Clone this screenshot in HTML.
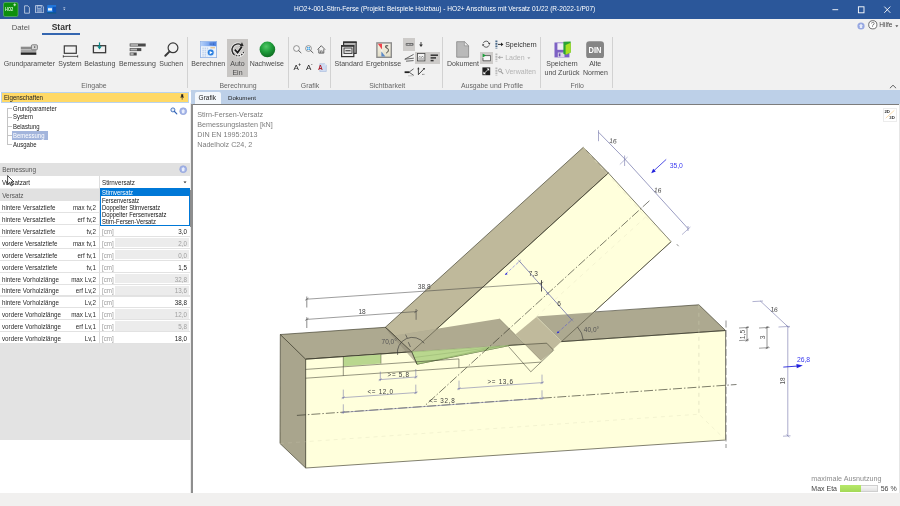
<!DOCTYPE html>
<html>
<head>
<meta charset="utf-8">
<title>HO2+</title>
<style>
*{box-sizing:border-box;margin:0;padding:0}
html,body{width:900px;height:506px;overflow:hidden}
body{position:relative;background:#f1f1f1;font-family:"Liberation Sans",sans-serif;color:#444}
.a{position:absolute}
.t{position:absolute;white-space:nowrap;line-height:1;font-size:7px;color:#4a4a4a}
.c{transform:translateX(-50%)}
.r{transform:translateX(-100%)}
.n{transform:scaleX(0.905);transform-origin:0 50%}
.nr{transform:translateX(-100%) scaleX(0.905);transform-origin:100% 50%}
.gl{color:#6a6a6a}
.sep{position:absolute;top:37px;width:1px;height:51px;background:#d2d2d2}
.row{position:absolute;left:0;width:189px;height:12px;background:#fff;border-bottom:1px solid #e4e4e4}
.row .t{font-size:6.25px;color:#333}
.ro{position:absolute;left:115px;top:1px;width:74px;height:10px;background:#ececec}
</style>
</head>
<body>
<div id="w" style="position:absolute;left:0;top:0;width:900px;height:506px;will-change:transform">
<!-- TITLE BAR -->
<div class="a" style="left:0;top:0;width:900px;height:19px;background:#2b579a"></div>
<div class="t" style="left:294px;top:5.5px;font-size:6.55px;color:#fff">HO2+-001-Stirn-Ferse (Projekt: Beispiele Holzbau) - HO2+ Anschluss mit Versatz 01/22 (R-2022-1/P07)</div>
<!--TITLEICONS-->
<!-- RIBBON -->
<div class="a" style="left:0;top:19px;width:900px;height:72px;background:#f1f1f1"></div>
<div class="t" style="left:11.8px;top:23.6px;font-size:7.7px;color:#555">Datei</div>
<div class="t" style="left:51.7px;top:23.3px;font-size:8.5px;font-weight:bold;color:#333">Start</div>
<div class="a" style="left:42px;top:33px;width:38px;height:2px;background:#3566b0"></div>
<!--RIBBON_START-->
<svg class="a" style="left:3px;top:2px" width="15.5" height="15" viewBox="0 0 15.5 15"><rect x="0.5" y="0.5" width="14.5" height="14" rx="1.5" fill="#0d8f0d" stroke="#6fbf6f" stroke-width="0.6"/><text x="2" y="9.2" font-family="Liberation Sans" font-size="4.8" font-weight="bold" fill="#d8f5d8" textLength="8.2" lengthAdjust="spacingAndGlyphs">HO2</text><path d="M11.7 1.4v2.8M10.3 2.8h2.8" stroke="#fff" stroke-width="0.7"/></svg>
<svg class="a" style="left:24px;top:5px" width="6" height="9" viewBox="0 0 6 9"><path d="M0.6 0.8H3.8L5.4 2.6V8.2H0.6Z" fill="#2b579a" stroke="#e6ecf6" stroke-width="0.7"/></svg>
<svg class="a" style="left:34.8px;top:4.8px" width="9.4" height="8.4" viewBox="0 0 9.4 8.4"><path d="M0.5 0.6H7.2L8.7 2V7.8H0.5Z" fill="#3a64a6" stroke="#dfe7f4" stroke-width="0.7"/><rect x="2.2" y="0.9" width="4" height="2.4" fill="none" stroke="#dfe7f4" stroke-width="0.5"/><path d="M2 4.8h5M2 5.9h5M2 7h5" stroke="#dfe7f4" stroke-width="0.45"/></svg>
<svg class="a" style="left:47px;top:5px" width="10" height="9" viewBox="0 0 10 9"><rect x="0.3" y="0.3" width="8.8" height="7.9" fill="#0d52b8"/><path d="M0.3 0.3H9.1V1.6H0.3Z" fill="#2a86ea"/><path d="M0.3 1.6H5.6V7H0.3Z" fill="#2a86ea"/><rect x="1" y="3.2" width="4" height="2.4" fill="#e8f2fc"/><path d="M0.3 8h8.8" stroke="#0a6a5a" stroke-width="0.6"/></svg>
<svg class="a" style="left:63.1px;top:7.4px" width="2.6" height="4" viewBox="0 0 2.6 4"><path d="M0.3 0.5h2" stroke="#c8d2e6" stroke-width="0.6"/><path d="M0.3 1.8h2L1.3 3.2Z" fill="#e6ecf6"/></svg>
<svg class="a" style="left:831px;top:5px" width="60" height="9" viewBox="0 0 60 9"><path d="M1.4 4.7h5.8" stroke="#fff" stroke-width="0.9"/><rect x="27.4" y="1.8" width="5.6" height="6" fill="none" stroke="#fff" stroke-width="0.9"/><path d="M53.3 1.6l6 6.2M59.3 1.6l-6 6.2" stroke="#fff" stroke-width="0.9"/></svg>
<svg class="a" style="left:856.5px;top:21.5px" width="8" height="8" viewBox="0 0 8 8"><circle cx="4" cy="4" r="3.6" fill="#97a8e2"/><path d="M4 1.8L6 4H5.2V6H2.8V4H2Z" fill="#e6ecfb"/></svg>
<svg class="a" style="left:867.5px;top:20.3px" width="10" height="10" viewBox="0 0 10 10"><circle cx="4.8" cy="4.8" r="4.1" fill="#fff" stroke="#333" stroke-width="0.7"/><text x="4.8" y="7.2" text-anchor="middle" font-family="Liberation Sans" font-size="6.6" fill="#333">?</text></svg>
<div class="t " style="left:879.2px;top:22.0px;font-size:6.6px;color:#444">Hilfe</div>
<svg class="a" style="left:894.5px;top:24.5px" width="4" height="3" viewBox="0 0 4 3"><path d="M0.3 0.3h3L1.8 2.2Z" fill="#555"/></svg>
<div class="sep" style="left:186.5px"></div>
<div class="sep" style="left:288.0px"></div>
<div class="sep" style="left:330.0px"></div>
<div class="sep" style="left:441.9px"></div>
<div class="sep" style="left:540.2px"></div>
<div class="sep" style="left:612.1px"></div>
<div class="t c" style="left:94.0px;top:82.8px;font-size:6.9px;color:#666">Eingabe</div>
<div class="t c" style="left:238.0px;top:82.8px;font-size:6.9px;color:#666">Berechnung</div>
<div class="t c" style="left:310.0px;top:82.8px;font-size:6.9px;color:#666">Grafik</div>
<div class="t c" style="left:387.2px;top:82.8px;font-size:6.9px;color:#666">Sichtbarkeit</div>
<div class="t c" style="left:492.0px;top:82.8px;font-size:6.9px;color:#666">Ausgabe und Profile</div>
<div class="t c" style="left:577.2px;top:82.8px;font-size:6.9px;color:#666">Frilo</div>
<svg class="a" style="left:889px;top:83.6px" width="8" height="5" viewBox="0 0 8 5"><path d="M0.9 4.2L4 1.2L7.1 4.2" fill="none" stroke="#555" stroke-width="0.9"/></svg>
<svg class="a" style="left:20px;top:43.5px" width="18" height="11.5" viewBox="0 0 18 11.5"><rect x="0.8" y="2.7" width="15.5" height="2.7" fill="#8c8c8c"/><rect x="0.8" y="5.7" width="15.5" height="2.4" fill="#a6a6a6"/><rect x="0.8" y="8.4" width="15.5" height="2.4" fill="#242424"/><rect x="11.4" y="0.8" width="6" height="5" rx="1" fill="#d4d4d4" stroke="#777" stroke-width="0.9"/><rect x="14" y="2.3" width="1.3" height="1.6" fill="#666"/></svg>
<div class="t c" style="left:29.4px;top:59.9px;font-size:7px">Grundparameter</div>
<svg class="a" style="left:61.5px;top:44px" width="17" height="14" viewBox="0 0 17 14"><rect x="2.3" y="1.9" width="12" height="7.4" fill="none" stroke="#3a3a3a" stroke-width="1.2"/><path d="M1 12.4H16M1.3 11.2v2.4M15.7 11.2v2.4" stroke="#3a3a3a" stroke-width="0.8"/></svg>
<div class="t c" style="left:69.9px;top:59.9px;font-size:7px">System</div>
<svg class="a" style="left:92px;top:42px" width="15" height="12" viewBox="0 0 15 12"><rect x="1.4" y="3.7" width="12.2" height="7" fill="none" stroke="#3a3a3a" stroke-width="1.3"/><path d="M7.5 0.4V5" stroke="#0a8a8a" stroke-width="1.2"/><path d="M5.2 4.2h4.6L7.5 7.4Z" fill="#0a8a8a"/></svg>
<div class="t c" style="left:99.8px;top:59.9px;font-size:7px">Belastung</div>
<svg class="a" style="left:128.5px;top:43px" width="18" height="13" viewBox="0 0 18 13"><rect x="0.7" y="0.5" width="16" height="3" fill="#4a4a4a"/><rect x="1.4" y="1.1" width="7.6" height="1.8" fill="#b5b5b5"/><rect x="0.7" y="5.1" width="11.6" height="3" fill="#4a4a4a"/><rect x="1.4" y="5.7" width="6.6" height="1.8" fill="#b5b5b5"/><rect x="0.7" y="9.5" width="7" height="3" fill="#4a4a4a"/><rect x="1.4" y="10.1" width="3.2" height="1.8" fill="#b5b5b5"/></svg>
<div class="t c" style="left:137.4px;top:59.9px;font-size:7px">Bemessung</div>
<svg class="a" style="left:163px;top:40.5px" width="17" height="17" viewBox="0 0 17 17"><circle cx="10" cy="6.8" r="4.9" fill="none" stroke="#3a3a3a" stroke-width="1.2"/><path d="M6.4 10.6L2.3 14.8" stroke="#3a3a3a" stroke-width="2" stroke-linecap="round"/></svg>
<div class="t c" style="left:171.2px;top:59.9px;font-size:7px">Suchen</div>
<svg class="a" style="left:200px;top:41px" width="17" height="17" viewBox="0 0 17 17"><defs><linearGradient id="bh" x1="0" x2="1"><stop offset="0" stop-color="#b4d0fa"/><stop offset="1" stop-color="#4a82e4"/></linearGradient></defs><rect x="0.4" y="0.4" width="16.2" height="16.2" fill="#eef4fc" stroke="#8fb0e4" stroke-width="0.8"/><rect x="0.8" y="0.8" width="15.4" height="4.4" fill="url(#bh)"/><path d="M9.6 2.2h5.2M9.6 3.6h5.2" stroke="#2a55b0" stroke-width="0.7" stroke-dasharray="1.2 0.5"/><path d="M2.4 7.2h6.4M2.4 9.2h6.4M2.4 11.2h5M2.4 13.2h5M2.4 15h5" stroke="#9ab6e0" stroke-width="0.8" stroke-dasharray="1.4 0.8"/><path d="M10.4 6.8h4.6" stroke="#e6a848" stroke-width="0.8"/><circle cx="10.7" cy="11.6" r="3.9" fill="#d8e8fa"/><circle cx="10.7" cy="11.6" r="3" fill="#2a7fe0"/><path d="M9.7 9.9L12.6 11.6L9.7 13.3Z" fill="#fff"/></svg>
<div class="t c" style="left:208.3px;top:59.9px;font-size:7px">Berechnen</div>
<div class="a" style="left:227px;top:39px;width:21px;height:38.4px;background:#c8c6c4"></div>
<svg class="a" style="left:229.5px;top:41.5px" width="16" height="16" viewBox="0 0 16 16"><g fill="none" stroke="#fff" stroke-opacity="0.7" stroke-width="3"><path d="M4.56 12.81A6 6 0 0 1 11 2.7"/><path d="M5.95 13.54A6 6 0 0 0 13.64 9.95"/><path d="M4.8 7.7L7.6 10.6L11.8 4.8"/></g><path d="M4.56 12.81A6 6 0 0 1 11 2.7" fill="none" stroke="#2a2a2a" stroke-width="1.4"/><path d="M5.95 13.54A6 6 0 0 0 13.64 9.95" fill="none" stroke="#2a2a2a" stroke-width="1.2" stroke-dasharray="1.5 1.1"/><path d="M13.6 4.1L12.03 0.3L9.5 4.6Z" fill="#2a2a2a"/><path d="M4.8 7.7L7.6 10.6L11.8 4.8" fill="none" stroke="#1a1a1a" stroke-width="1.8"/></svg>
<div class="t c" style="left:237.5px;top:59.9px;font-size:7px">Auto</div>
<div class="t c" style="left:237.5px;top:68.6px;font-size:7px">Ein</div>
<svg class="a" style="left:258.5px;top:41px" width="17" height="17" viewBox="0 0 17 17"><defs><radialGradient id="gs" cx="0.42" cy="0.32" r="0.7"><stop offset="0" stop-color="#54c868"/><stop offset="0.5" stop-color="#1f9d3b"/><stop offset="1" stop-color="#0e6a20"/></radialGradient></defs><circle cx="8.4" cy="8.4" r="7.8" fill="url(#gs)"/></svg>
<div class="t c" style="left:266.8px;top:59.9px;font-size:7px">Nachweise</div>
<svg class="a" style="left:292.8px;top:45.2px" width="9" height="9" viewBox="0 0 9 9"><circle cx="3.5" cy="3.5" r="2.9" fill="#f6f6f6" stroke="#6a6a6a" stroke-width="0.7"/><path d="M5.7 5.7L8 7.8" stroke="#555" stroke-width="0.9" stroke-linecap="round"/></svg>
<svg class="a" style="left:305.2px;top:45.2px" width="9" height="9" viewBox="0 0 9 9"><circle cx="3.5" cy="3.5" r="2.9" fill="#f6f6f6" stroke="#6a6a6a" stroke-width="0.7"/><rect x="2" y="2" width="3" height="3" fill="#4aa6e6"/><path d="M3.5 2v3M2 3.5h3" stroke="#e8f4fc" stroke-width="0.5"/><path d="M5.7 5.7L8 7.8" stroke="#555" stroke-width="0.9" stroke-linecap="round"/></svg>
<svg class="a" style="left:317.4px;top:45.2px" width="9" height="9" viewBox="0 0 9 9"><path d="M0.5 4.6L4.3 0.7L8.1 4.6" fill="none" stroke="#444" stroke-width="0.8"/><path d="M1.8 4.2V8.1H6.8V4.2" fill="none" stroke="#444" stroke-width="0.8"/><path d="M3.4 8V5.9H5.2V8" fill="none" stroke="#444" stroke-width="0.6"/></svg>
<div class="t" style="left:293.6px;top:63.6px;font-size:8px;color:#1a1a1a">A<span style="font-size:4.6px;line-height:0;vertical-align:3.6px;font-weight:bold;margin-left:-0.6px">+</span></div>
<div class="t" style="left:306px;top:63.6px;font-size:8px;color:#1a1a1a">A<span style="font-size:4.6px;line-height:0;vertical-align:3.6px;font-weight:bold;margin-left:-0.4px">-</span></div>
<svg class="a" style="left:317.6px;top:62.8px" width="9" height="9.5" viewBox="0 0 9 9.5"><path d="M1.8 0.7H6.8L8.3 2.2V8.5H1.8Z" fill="#cfdcf2" stroke="#9ab0d8" stroke-width="0.5"/><path d="M6.8 0.7V2.2H8.3Z" fill="#f4f8fe"/><text x="0.1" y="7" font-family="Liberation Sans" font-size="6.6" font-weight="bold" fill="#b0202c">A</text></svg>
<svg class="a" style="left:340px;top:41px" width="18" height="17" viewBox="0 0 18 17"><rect x="3.6" y="1" width="12.6" height="11.4" fill="#b4b4b4" stroke="#333" stroke-width="1.1"/><path d="M3.2 1.3h13.4" stroke="#333" stroke-width="1.4"/><rect x="1.6" y="4.6" width="12.2" height="11" fill="#f1f1f1" stroke="#333" stroke-width="1.2"/><path d="M1.2 5h13" stroke="#333" stroke-width="1.6"/><rect x="4" y="7" width="8" height="5.4" fill="#e4e4e4" stroke="#333" stroke-width="0.9"/><path d="M5.4 9.7h5.2" stroke="#555" stroke-width="1.3"/></svg>
<div class="t c" style="left:348.8px;top:59.9px;font-size:7px">Standard</div>
<svg class="a" style="left:376px;top:41.8px" width="16" height="16" viewBox="0 0 16 16"><defs><linearGradient id="eg" x1="0" y1="0" x2="0" y2="1"><stop offset="0" stop-color="#f6f2e4"/><stop offset="1" stop-color="#e2dec8"/></linearGradient></defs><rect x="0.9" y="0.9" width="14.4" height="14.4" fill="url(#eg)" stroke="#8c8c8c" stroke-width="1.4"/><path d="M1.8 1.8H6L6 7.6Z" fill="#f0444c"/><path d="M5.4 9.4L9.4 14.4H5.4Z" fill="#5a88c8"/><path d="M5.6 7.6L6 9.6" stroke="#f8f8f8" stroke-width="1"/><path d="M12.2 3.8H9.7L10 6C12.6 5.4 13.6 9.8 10.2 11" fill="none" stroke="#2a2a2a" stroke-width="0.9"/></svg>
<div class="t c" style="left:383.6px;top:59.9px;font-size:7px">Ergebnisse</div>
<div class="a" style="left:403px;top:38.2px;width:11.8px;height:12.6px;background:#cdcbc9"></div>
<div class="a" style="left:415.3px;top:51.9px;width:24.6px;height:12.6px;background:#cdcbc9"></div>
<svg class="a" style="left:404.5px;top:41px" width="9" height="7" viewBox="0 0 9 7"><rect x="0.7" y="2.1" width="7.8" height="2.6" rx="0.8" fill="#6a6a6a"/><path d="M1.7 3.4h5.8" stroke="#e8e8e8" stroke-width="0.9" stroke-dasharray="0.9 0.5"/></svg>
<svg class="a" style="left:418.4px;top:40.6px" width="6" height="7" viewBox="0 0 6 7"><path d="M3 1V4" stroke="#333" stroke-width="0.9"/><path d="M1.1 3.5h3.8L3 5.9Z" fill="#333"/></svg>
<svg class="a" style="left:404px;top:53px" width="11" height="9" viewBox="0 0 11 9"><path d="M0.8 6.2L9.6 1.4M0.8 6.2L9.8 5.2M2 8.2L9.6 7.6" fill="none" stroke="#444" stroke-width="0.8"/></svg>
<svg class="a" style="left:417.3px;top:53.4px" width="8.4" height="8.4" viewBox="0 0 8.4 8.4"><rect x="0.5" y="0.5" width="7.4" height="7.4" fill="#f4f4f4" stroke="#444" stroke-width="0.8"/><path d="M1.6 4.6L3 3.4L4.2 4.6L5.4 3.2L6.8 4.6" fill="none" stroke="#444" stroke-width="0.6"/><path d="M1.4 6h5.6" stroke="#444" stroke-width="0.6"/></svg>
<svg class="a" style="left:429.5px;top:53.5px" width="9" height="8" viewBox="0 0 9 8"><path d="M0.6 1.2h7.4" stroke="#333" stroke-width="1.5"/><path d="M0.6 3.9h5.4" stroke="#333" stroke-width="1.5"/><path d="M0.6 6.6h3" stroke="#333" stroke-width="1.5"/></svg>
<svg class="a" style="left:404px;top:67.5px" width="11" height="9" viewBox="0 0 11 9"><path d="M0.6 4.2h4.6" stroke="#222" stroke-width="1.8"/><path d="M5 4.2L9.6 0.8M5 4.2L9.8 7.4" fill="none" stroke="#444" stroke-width="0.8"/><path d="M4 7.8h5" stroke="#999" stroke-width="0.5"/></svg>
<svg class="a" style="left:417.3px;top:67px" width="9" height="9" viewBox="0 0 9 9"><path d="M1.4 0.6V7.8" stroke="#333" stroke-width="0.9"/><path d="M1.4 7.6L7.4 1.4" stroke="#333" stroke-width="0.9"/><path d="M0.2 2.2L1.4 0.4L2.6 2.2ZM5.8 1L7.8 0.9L7.6 2.9Z" fill="#333"/><path d="M5 7.4h3" stroke="#333" stroke-width="0.7" stroke-dasharray="0.8 0.6"/></svg>
<svg class="a" style="left:456px;top:41px" width="13.5" height="17" viewBox="0 0 13.5 17"><path d="M0.7 0.7H8.4L12.6 4.8V16.2H0.7Z" fill="#b9b9b9" stroke="#858585" stroke-width="0.8"/><path d="M8.4 0.7V4.8H12.6Z" fill="#efefef" stroke="#858585" stroke-width="0.6"/></svg>
<div class="t c" style="left:463.0px;top:59.9px;font-size:7px">Dokument</div>
<div class="a" style="left:480.4px;top:51.9px;width:12.4px;height:12.6px;background:#cdcbc9"></div>
<svg class="a" style="left:482.3px;top:40px" width="8.4" height="8.4" viewBox="0 0 8.4 8.4"><path d="M1.29 3.14A3.1 3.1 0 0 1 7.11 3.14" fill="none" stroke="#333" stroke-width="0.75"/><path d="M7.11 5.26A3.1 3.1 0 0 1 1.29 5.26" fill="none" stroke="#333" stroke-width="0.75"/><path d="M7.66 4.7L8.4 2.7L5.9 3.5ZM0.74 3.7L0 5.7L2.5 4.9Z" fill="#333"/></svg>
<svg class="a" style="left:481.8px;top:53.4px" width="9.6" height="8.6" viewBox="0 0 9.6 8.6"><path d="M3 2.6H8.6V7.8H1V5" fill="#f8f8f8" stroke="#444" stroke-width="0.8"/><path d="M0.6 0.4L4 2.4L0.6 4.4Z" fill="#18a038"/></svg>
<svg class="a" style="left:482.3px;top:67.3px" width="8.6" height="8.6" viewBox="0 0 8.6 8.6"><rect x="0.4" y="0.4" width="7.8" height="7.8" fill="#1e1e1e"/><path d="M4.6 1.4H7.2V4ZM1.4 4.6V7.2H4Z" fill="#fff"/><path d="M2.2 6.4L6.4 2.2" stroke="#fff" stroke-width="0.8"/></svg>
<svg class="a" style="left:494.5px;top:40px" width="9" height="9" viewBox="0 0 9 9"><path d="M1.4 0.4V8.4" stroke="#4a6a8a" stroke-width="2" stroke-dasharray="1.8 0.7"/><path d="M3 4.4H7" stroke="#222" stroke-width="0.9"/><path d="M6 2.6L8.4 4.4L6 6.2Z" fill="#222"/></svg>
<svg class="a" style="left:494.5px;top:53.4px" width="9" height="9" viewBox="0 0 9 9"><path d="M1.4 0.4V8.4" stroke="#b8b8b8" stroke-width="2" stroke-dasharray="1.8 0.7"/><path d="M4 4.4H8" stroke="#aaa" stroke-width="0.9"/><path d="M5.2 2.6L2.8 4.4L5.2 6.2Z" fill="#aaa"/></svg>
<svg class="a" style="left:494.5px;top:67.3px" width="9" height="9" viewBox="0 0 9 9"><path d="M1.4 0.4V8.4" stroke="#b8b8b8" stroke-width="2" stroke-dasharray="1.8 0.7"/><circle cx="5" cy="3.4" r="1.5" fill="none" stroke="#999" stroke-width="0.9"/><path d="M6 4.6L8.2 7" stroke="#999" stroke-width="1.1"/></svg>
<div class="t " style="left:505.2px;top:40.8px;font-size:7px;color:#333">Speichern</div>
<div class="t " style="left:505.2px;top:54.3px;font-size:7px;color:#b4b4b4">Laden</div>
<svg class="a" style="left:527px;top:57px" width="4" height="3" viewBox="0 0 4 3"><path d="M0.3 0.3h3L1.8 2.2Z" fill="#b4b4b4"/></svg>
<div class="t " style="left:505.2px;top:68.1px;font-size:7px;color:#b4b4b4">Verwalten</div>
<svg class="a" style="left:553.5px;top:40.5px" width="18" height="17" viewBox="0 0 18 17"><rect x="0.5" y="1.5" width="14.9" height="14.9" fill="#7d61c4"/><rect x="3.4" y="2.2" width="6.7" height="6.6" fill="#f0eef6"/><rect x="3.8" y="11.5" width="6.7" height="4.5" fill="#dcd8e8"/><rect x="4.8" y="12.4" width="1.6" height="3" fill="#6a4eb0"/><path d="M9.4 0.8L16.7 0.4V11.5L11.6 13.7L9.4 12.8Z" fill="#2aa434"/><path d="M11.6 3.9L16.7 1.7V11.5L11.6 13.7Z" fill="#a8e024"/></svg>
<div class="t c" style="left:562.0px;top:59.9px;font-size:7px">Speichern</div>
<div class="t c" style="left:562.0px;top:68.6px;font-size:7px">und Zurück</div>
<svg class="a" style="left:586px;top:40.6px" width="18.2" height="17.8" viewBox="0 0 18.2 17.8"><rect x="0.2" y="0.2" width="17.8" height="17.4" rx="3.2" fill="#858585"/><text x="2.6" y="11.8" font-family="Liberation Sans" font-size="8.8" font-weight="bold" fill="#fff" textLength="12.9" lengthAdjust="spacingAndGlyphs">DIN</text></svg>
<div class="t c" style="left:595.2px;top:59.9px;font-size:7px">Alte</div>
<div class="t c" style="left:595.4px;top:68.6px;font-size:7px">Normen</div>
<!--RIBBON_END-->
<!-- LEFT PANEL -->
<!--LEFT_START-->
<div class="a" style="left:0;top:92px;width:191px;height:401px;background:#fff"></div>
<div class="a" style="left:1px;top:92px;width:187.5px;height:10.5px;background:#ffd966;border:1px solid #b9d3ee"></div>
<div class="t n" style="left:3.8px;top:94.5px;font-size:6.8px;color:#222">Eigenschaften</div>
<svg class="a" style="left:180.4px;top:94.2px" width="4.4" height="6" viewBox="0 0 4.4 6"><path d="M1.2 0.3h2v2.4h0.8v0.8H0.4V2.7h0.8z" fill="#222"/><path d="M2.2 3.5v2.2" stroke="#222" stroke-width="0.6"/></svg>
<div class="a" style="left:7px;top:108px;width:0;height:36px;border-left:1px solid #c4c4c4"></div>
<div class="a" style="left:7px;top:108.0px;width:4.5px;height:0;border-top:1px solid #c4c4c4"></div>
<div class="a" style="left:7px;top:116.9px;width:4.5px;height:0;border-top:1px solid #c4c4c4"></div>
<div class="a" style="left:7px;top:126.1px;width:4.5px;height:0;border-top:1px solid #c4c4c4"></div>
<div class="a" style="left:7px;top:135.1px;width:4.5px;height:0;border-top:1px solid #c4c4c4"></div>
<div class="a" style="left:7px;top:144.0px;width:4.5px;height:0;border-top:1px solid #c4c4c4"></div>
<div class="a" style="left:11.6px;top:131.2px;width:36.4px;height:8.4px;background:#a3b5dc"></div>
<div class="t n" style="left:13.3px;top:105.5px;font-size:6.6px;color:#222">Grundparameter</div>
<div class="t n" style="left:13.3px;top:114.4px;font-size:6.6px;color:#222">System</div>
<div class="t n" style="left:13.3px;top:123.6px;font-size:6.6px;color:#222">Belastung</div>
<div class="t n" style="left:13.3px;top:132.6px;font-size:6.6px;color:#fff">Bemessung</div>
<div class="t n" style="left:13.3px;top:141.5px;font-size:6.6px;color:#222">Ausgabe</div>
<svg class="a" style="left:170.3px;top:107.3px" width="8" height="8" viewBox="0 0 8 8"><circle cx="2.9" cy="2.9" r="2" fill="#e6eefa" stroke="#3566b8" stroke-width="0.9"/><path d="M4.5 4.5L6.8 6.8" stroke="#3566b8" stroke-width="1.2" stroke-linecap="round"/></svg>
<svg class="a" style="left:179.4px;top:106.7px" width="8.4" height="8.4" viewBox="0 0 8.4 8.4"><circle cx="4.2" cy="4.2" r="3.5" fill="#a3b3e6" stroke="#8497d8" stroke-width="0.5"/><path d="M4.2 2L6.3 4.2H5.4V6.2H3V4.2H2.1Z" fill="#e8eefc"/></svg>
<div class="a" style="left:0;top:163px;width:189.5px;height:277px;background:#e3e3e3"></div>
<div class="a" style="left:0;top:163px;width:189.5px;height:13px;background:#e1e1e1"></div>
<div class="t" style="left:2.2px;top:167.2px;font-size:6.4px;color:#555">Bemessung</div>
<svg class="a" style="left:179.4px;top:165.4px" width="8.4" height="8.4" viewBox="0 0 8.4 8.4"><circle cx="4.2" cy="4.2" r="3.5" fill="#a3b3e6" stroke="#8497d8" stroke-width="0.5"/><path d="M4.2 2L6.3 4.2H5.4V6.2H3V4.2H2.1Z" fill="#e8eefc"/></svg>
<div class="a" style="left:0;top:176.3px;width:189.5px;height:11.6px;background:#fff"></div>
<div class="t n" style="left:2.2px;top:179.9px;font-size:6.9px;color:#222">Versatzart</div>
<div class="t n" style="left:101.8px;top:179.9px;font-size:6.9px;color:#222">Stirnversatz</div>
<svg class="a" style="left:182.6px;top:181.2px" width="4" height="3" viewBox="0 0 4 3"><path d="M0.5 0.4h3L2 2.3z" fill="#222"/></svg>
<div class="a" style="left:0;top:188.4px;width:189.5px;height:12.9px;background:#e1e1e1;border-top:1px solid #eee"></div>
<div class="t" style="left:2.2px;top:192.7px;font-size:6.4px;color:#555">Versatz</div>
<div class="a" style="left:0;top:201.3px;width:189.5px;height:11.9px;background:#fff;border-bottom:1px solid #e2e2e2"></div>
<div class="a" style="left:115px;top:202.3px;width:74px;height:9.3px;background:#ececec"></div>
<div class="t n" style="left:2.2px;top:205.1px;font-size:6.9px;color:#2a2a2a">hintere Versatztiefe</div>
<div class="t nr" style="left:95.8px;top:205.1px;font-size:6.9px;color:#2a2a2a">max tv,2</div>
<div class="t n" style="left:101.6px;top:205.1px;font-size:6.9px;color:#9a9a9a">[cm]</div>
<div class="a" style="left:0;top:213.2px;width:189.5px;height:11.9px;background:#fff;border-bottom:1px solid #e2e2e2"></div>
<div class="a" style="left:115px;top:214.2px;width:74px;height:9.3px;background:#ececec"></div>
<div class="t n" style="left:2.2px;top:217.0px;font-size:6.9px;color:#2a2a2a">hintere Versatztiefe</div>
<div class="t nr" style="left:95.8px;top:217.0px;font-size:6.9px;color:#2a2a2a">erf tv,2</div>
<div class="t n" style="left:101.6px;top:217.0px;font-size:6.9px;color:#9a9a9a">[cm]</div>
<div class="a" style="left:0;top:225.1px;width:189.5px;height:11.9px;background:#fff;border-bottom:1px solid #e2e2e2"></div>
<div class="t n" style="left:2.2px;top:228.9px;font-size:6.9px;color:#2a2a2a">hintere Versatztiefe</div>
<div class="t nr" style="left:95.8px;top:228.9px;font-size:6.9px;color:#2a2a2a">tv,2</div>
<div class="t n" style="left:101.6px;top:228.9px;font-size:6.9px;color:#9a9a9a">[cm]</div>
<div class="t nr" style="left:186.8px;top:228.9px;font-size:6.9px;color:#222">3,0</div>
<div class="a" style="left:0;top:237.0px;width:189.5px;height:11.9px;background:#fff;border-bottom:1px solid #e2e2e2"></div>
<div class="a" style="left:115px;top:238.0px;width:74px;height:9.3px;background:#ececec"></div>
<div class="t n" style="left:2.2px;top:240.8px;font-size:6.9px;color:#2a2a2a">vordere Versatztiefe</div>
<div class="t nr" style="left:95.8px;top:240.8px;font-size:6.9px;color:#2a2a2a">max tv,1</div>
<div class="t n" style="left:101.6px;top:240.8px;font-size:6.9px;color:#9a9a9a">[cm]</div>
<div class="t nr" style="left:186.8px;top:240.8px;font-size:6.9px;color:#a0a0a0">2,0</div>
<div class="a" style="left:0;top:248.9px;width:189.5px;height:11.9px;background:#fff;border-bottom:1px solid #e2e2e2"></div>
<div class="a" style="left:115px;top:249.9px;width:74px;height:9.3px;background:#ececec"></div>
<div class="t n" style="left:2.2px;top:252.7px;font-size:6.9px;color:#2a2a2a">vordere Versatztiefe</div>
<div class="t nr" style="left:95.8px;top:252.7px;font-size:6.9px;color:#2a2a2a">erf tv,1</div>
<div class="t n" style="left:101.6px;top:252.7px;font-size:6.9px;color:#9a9a9a">[cm]</div>
<div class="t nr" style="left:186.8px;top:252.7px;font-size:6.9px;color:#a0a0a0">0,0</div>
<div class="a" style="left:0;top:260.8px;width:189.5px;height:11.9px;background:#fff;border-bottom:1px solid #e2e2e2"></div>
<div class="t n" style="left:2.2px;top:264.6px;font-size:6.9px;color:#2a2a2a">vordere Versatztiefe</div>
<div class="t nr" style="left:95.8px;top:264.6px;font-size:6.9px;color:#2a2a2a">tv,1</div>
<div class="t n" style="left:101.6px;top:264.6px;font-size:6.9px;color:#9a9a9a">[cm]</div>
<div class="t nr" style="left:186.8px;top:264.6px;font-size:6.9px;color:#222">1,5</div>
<div class="a" style="left:0;top:272.7px;width:189.5px;height:11.9px;background:#fff;border-bottom:1px solid #e2e2e2"></div>
<div class="a" style="left:115px;top:273.7px;width:74px;height:9.3px;background:#ececec"></div>
<div class="t n" style="left:2.2px;top:276.5px;font-size:6.9px;color:#2a2a2a">hintere Vorholzlänge</div>
<div class="t nr" style="left:95.8px;top:276.5px;font-size:6.9px;color:#2a2a2a">max Lv,2</div>
<div class="t n" style="left:101.6px;top:276.5px;font-size:6.9px;color:#9a9a9a">[cm]</div>
<div class="t nr" style="left:186.8px;top:276.5px;font-size:6.9px;color:#a0a0a0">32,8</div>
<div class="a" style="left:0;top:284.6px;width:189.5px;height:11.9px;background:#fff;border-bottom:1px solid #e2e2e2"></div>
<div class="a" style="left:115px;top:285.6px;width:74px;height:9.3px;background:#ececec"></div>
<div class="t n" style="left:2.2px;top:288.4px;font-size:6.9px;color:#2a2a2a">hintere Vorholzlänge</div>
<div class="t nr" style="left:95.8px;top:288.4px;font-size:6.9px;color:#2a2a2a">erf Lv,2</div>
<div class="t n" style="left:101.6px;top:288.4px;font-size:6.9px;color:#9a9a9a">[cm]</div>
<div class="t nr" style="left:186.8px;top:288.4px;font-size:6.9px;color:#a0a0a0">13,6</div>
<div class="a" style="left:0;top:296.5px;width:189.5px;height:11.9px;background:#fff;border-bottom:1px solid #e2e2e2"></div>
<div class="t n" style="left:2.2px;top:300.2px;font-size:6.9px;color:#2a2a2a">hintere Vorholzlänge</div>
<div class="t nr" style="left:95.8px;top:300.2px;font-size:6.9px;color:#2a2a2a">Lv,2</div>
<div class="t n" style="left:101.6px;top:300.2px;font-size:6.9px;color:#9a9a9a">[cm]</div>
<div class="t nr" style="left:186.8px;top:300.2px;font-size:6.9px;color:#222">38,8</div>
<div class="a" style="left:0;top:308.4px;width:189.5px;height:11.9px;background:#fff;border-bottom:1px solid #e2e2e2"></div>
<div class="a" style="left:115px;top:309.4px;width:74px;height:9.3px;background:#ececec"></div>
<div class="t n" style="left:2.2px;top:312.2px;font-size:6.9px;color:#2a2a2a">vordere Vorholzlänge</div>
<div class="t nr" style="left:95.8px;top:312.2px;font-size:6.9px;color:#2a2a2a">max Lv,1</div>
<div class="t n" style="left:101.6px;top:312.2px;font-size:6.9px;color:#9a9a9a">[cm]</div>
<div class="t nr" style="left:186.8px;top:312.2px;font-size:6.9px;color:#a0a0a0">12,0</div>
<div class="a" style="left:0;top:320.3px;width:189.5px;height:11.9px;background:#fff;border-bottom:1px solid #e2e2e2"></div>
<div class="a" style="left:115px;top:321.3px;width:74px;height:9.3px;background:#ececec"></div>
<div class="t n" style="left:2.2px;top:324.1px;font-size:6.9px;color:#2a2a2a">vordere Vorholzlänge</div>
<div class="t nr" style="left:95.8px;top:324.1px;font-size:6.9px;color:#2a2a2a">erf Lv,1</div>
<div class="t n" style="left:101.6px;top:324.1px;font-size:6.9px;color:#9a9a9a">[cm]</div>
<div class="t nr" style="left:186.8px;top:324.1px;font-size:6.9px;color:#a0a0a0">5,8</div>
<div class="a" style="left:0;top:332.2px;width:189.5px;height:11.9px;background:#fff;border-bottom:1px solid #e2e2e2"></div>
<div class="t n" style="left:2.2px;top:336.0px;font-size:6.9px;color:#2a2a2a">vordere Vorholzlänge</div>
<div class="t nr" style="left:95.8px;top:336.0px;font-size:6.9px;color:#2a2a2a">Lv,1</div>
<div class="t n" style="left:101.6px;top:336.0px;font-size:6.9px;color:#9a9a9a">[cm]</div>
<div class="t nr" style="left:186.8px;top:336.0px;font-size:6.9px;color:#222">18,0</div>
<div class="a" style="left:99px;top:176.3px;width:1px;height:167.8px;background:#dedede"></div>
<div class="a" style="left:100px;top:188.2px;width:89.6px;height:38px;background:#fff;border:1px solid #0078d7"></div>
<div class="a" style="left:101px;top:189.4px;width:87.6px;height:6.8px;background:#0078d7"></div>
<div class="t n" style="left:101.8px;top:190.1px;font-size:6.5px;color:#fff">Stirnversatz</div>
<div class="t n" style="left:101.8px;top:197.6px;font-size:6.5px;color:#111">Fersenversatz</div>
<div class="t n" style="left:101.8px;top:204.7px;font-size:6.5px;color:#111">Doppelter Stirnversatz</div>
<div class="t n" style="left:101.8px;top:211.8px;font-size:6.5px;color:#111">Doppelter Fersenversatz</div>
<div class="t n" style="left:101.8px;top:218.9px;font-size:6.5px;color:#111">Stirn-Fersen-Versatz</div>
<svg class="a" style="left:6.5px;top:175px" width="8" height="12" viewBox="0 0 8 12"><path d="M0.6 0.6V9.4L2.7 7.4L4.2 10.9L5.5 10.3L4 6.9H6.9Z" fill="#fff" stroke="#000" stroke-width="0.7" stroke-linejoin="round"/></svg>
<div class="a" style="left:189.5px;top:103px;width:1.5px;height:389.5px;background:#ececec"></div>
<div class="a" style="left:189.6px;top:190px;width:1.5px;height:37px;background:#8c8c8c"></div>
<!--LEFT_END-->
<!-- TAB STRIP + CANVAS -->
<div class="a" style="left:191px;top:90.2px;width:709px;height:14.8px;background:#bdd0e8"></div>
<div class="a" style="left:194.5px;top:92px;width:26px;height:13px;background:#f4f8fc;border-radius:2px 2px 0 0"></div>
<div class="t" style="left:198.6px;top:94.5px;font-size:6.5px;color:#222">Grafik</div>
<div class="t" style="left:228px;top:94.6px;font-size:6.15px;color:#222">Dokument</div>
<div class="a" style="left:191px;top:104.3px;width:708px;height:388.7px;background:#fff;border-top:1.2px solid #7c7c7c"></div>
<div class="a" style="left:191px;top:104.3px;width:1.5px;height:388.7px;background:#8e8e8e"></div>
<div class="a" style="left:899px;top:104px;width:1px;height:389px;background:#e6e6e6"></div>
<div class="t" style="left:197.2px;top:111px;font-size:7.2px;color:#7c7c7c">Stirn-Fersen-Versatz</div>
<div class="t" style="left:197.2px;top:121px;font-size:7.2px;color:#7c7c7c">Bemessungslasten [kN]</div>
<div class="t" style="left:197.2px;top:131px;font-size:7.2px;color:#7c7c7c">DIN EN 1995:2013</div>
<div class="t" style="left:197.2px;top:141px;font-size:7.2px;color:#7c7c7c">Nadelholz C24, 2</div>
<!-- 2D/3D icon -->
<div class="a" style="left:883px;top:108.2px;width:13.8px;height:13.4px;background:#fff;border:1px solid #ececec"></div>
<svg class="a" style="left:883px;top:108.2px" width="13.8" height="13.4" viewBox="0 0 13.8 13.4"><path d="M2.7 10.2L11.4 2.3" stroke="#fcd9a0" stroke-width="0.9"/><text x="1.5" y="5.2" font-family="Liberation Sans" font-size="4.3" font-weight="bold" fill="#333">2D</text><text x="6.3" y="10.7" font-family="Liberation Sans" font-size="4.3" font-weight="bold" fill="#333">3D</text></svg>
<!-- max eta -->
<div class="t" style="left:811.3px;top:475.2px;font-size:7.2px;color:#8c8c8c">maximale Ausnutzung</div>
<div class="t" style="left:811.3px;top:484.7px;font-size:7px;color:#444">Max Eta</div>
<div class="a" style="left:840px;top:485px;width:38px;height:7px;background:linear-gradient(#f6f6f6,#e2e2e2);border:1px solid #cfcfcf"></div>
<div class="a" style="left:840px;top:485px;width:21.3px;height:7px;background:linear-gradient(#b7e86a,#a3d957)"></div>
<div class="t" style="left:880.7px;top:484.7px;font-size:7px;color:#444">56 %</div>
<!-- DRAWING -->
<!--DRAWING_START-->
<svg class="a" style="left:0;top:0" width="900" height="506" viewBox="0 0 900 506" font-family="Liberation Sans, sans-serif">
<polygon points="583.3,147.3 608.4,173.0 411.7,351.8 385.3,327.3" fill="#bfb99b" stroke="#3d3b2a" stroke-width="0.65" />
<polygon points="608.4,173.0 671.1,241.7 561.5,341.6 525.0,344.3 417.0,364.2 411.7,351.8" fill="#ffffdc" stroke="#3d3b2a" stroke-width="0.65" />
<polygon points="280.3,334.5 305.7,359.2 305.7,468.0 280.0,443.5" fill="#a9a58d" stroke="#3d3b2a" stroke-width="0.65" />
<polygon points="280.3,334.5 385.3,327.3 411.7,351.8 305.7,359.2" fill="#ada990" stroke="#3d3b2a" stroke-width="0.65" />
<polygon points="394.9,335.6 436.9,328.8 499.4,318.8 525.0,344.3 411.7,351.8" fill="#afaa90" />
<polygon points="394.9,335.6 436.9,328.8 411.7,351.8" fill="#b5b095" />
<polygon points="536.4,316.4 698.9,304.8 725.6,330.5 561.5,341.6" fill="#ada990" />
<polyline points="594.6,311.9 698.9,304.8 725.6,330.5" fill="none" stroke="#3d3b2a" stroke-width="0.65" />
<polyline points="608.4,173.0 411.7,351.8" fill="none" stroke="#3d3b2a" stroke-width="0.5" />
<polyline points="671.1,241.7 561.5,341.6" fill="none" stroke="#3d3b2a" stroke-width="0.5" />
<polygon points="305.7,359.2 411.7,351.8 417.0,364.2 510.0,345.4 525.0,344.3 561.5,341.6 725.6,330.5 725.6,440.0 305.7,468.0" fill="#ffffdc" stroke="#3d3b2a" stroke-width="0.65" />
<polygon points="343.3,357.0 381.0,354.4 381.0,363.5 343.3,366.2" fill="#b9d78e" />
<polygon points="411.7,351.8 417.0,364.2 510.0,345.4" fill="#b9d78e" stroke="#6f8f4f" stroke-width="0.4" />
<polyline points="417.0,364.2 500.0,345.9" fill="none" stroke="#7d9c5c" stroke-width="0.4" />
<polyline points="414.0,357.5 508.0,345.3" fill="none" stroke="#8aa868" stroke-width="0.4" />
<polygon points="515.6,334.3 536.4,316.9 561.4,341.6 541.2,360.6" fill="#c0ba9c" />
<polygon points="525.0,344.3 546.7,343.0 553.5,350.2 541.2,360.6" fill="#b6b195" />
<polyline points="305.7,369.4 458.9,358.9 458.9,367.7" fill="none" stroke="#2e2e22" stroke-width="0.5" />
<polyline points="305.7,378.2 541.0,362.1" fill="none" stroke="#2e2e22" stroke-width="0.5" />
<polyline points="343.3,356.7 343.3,375.7" fill="none" stroke="#2e2e22" stroke-width="0.5" />
<polyline points="381.0,354.2 381.0,363.6" fill="none" stroke="#2e2e22" stroke-width="0.4" />
<polyline points="508.6,346.6 530.8,371.8 553.6,350.2 546.7,343.2 508.6,345.4" fill="none" stroke="#2e2e22" stroke-width="0.5" />
<polyline points="499.4,318.8 541.2,360.6" fill="none" stroke="#6a6752" stroke-width="0.4" />
<polyline points="411.7,351.8 417.0,364.2" fill="none" stroke="#2e2e22" stroke-width="0.7" />
<polyline points="385.3,327.3 411.7,351.8" fill="none" stroke="#2e2e22" stroke-width="0.7" />
<polyline points="305.7,359.2 411.7,351.8" fill="none" stroke="#2e2e22" stroke-width="0.6" />
<polyline points="561.5,341.6 725.6,330.5" fill="none" stroke="#2e2e22" stroke-width="0.6" />
<polygon points="385.3,327.3 411.7,351.8 416.6,363.5 389.0,333.0" fill="#8f8b76" stroke="none" stroke-width="0" opacity="0.55"/>
<polyline points="280.0,443.5 305.7,441.7" fill="none" stroke="#bbb79e" stroke-width="0.5" stroke-dasharray="4 4"/>
<polyline points="309.7,441.4 698.9,414.2 725.6,440.0" fill="none" stroke="#e6e6c4" stroke-width="0.5" stroke-dasharray="4 4"/>
<polyline points="698.9,304.8 698.9,414.2" fill="none" stroke="#cdcdb0" stroke-width="0.5" stroke-dasharray="4 4"/>
<polyline points="726.0,320.5 726.0,448.0" fill="none" stroke="#777" stroke-width="0.8" stroke-dasharray="7 2.5"/>
<polyline points="296.9,415.4 736.5,384.5" fill="none" stroke="#36362a" stroke-width="0.65" stroke-dasharray="9 2 1.5 2"/>
<polyline points="649.4,200.8 424.5,406.0" fill="none" stroke="#36362a" stroke-width="0.65" stroke-dasharray="9 2 1.5 2"/>
<polyline points="645.7,217.0 537.0,316.0" fill="none" stroke="#ecebc9" stroke-width="0.6" stroke-dasharray="4 4.5"/>
<polyline points="583.3,147.3 645.7,217.0 671.1,241.7" fill="none" stroke="#ecebc9" stroke-width="0.6" stroke-dasharray="4 4.5"/>
<polyline points="306.8,299.2 541.5,283.2" fill="none" stroke="#3c3c3c" stroke-width="0.5" />
<polyline points="306.8,296.5 306.8,307.5" fill="none" stroke="#3c3c3c" stroke-width="0.6" />
<polyline points="541.5,280.2 541.5,291.5" fill="none" stroke="#3c3c3c" stroke-width="0.9" />
<polyline points="306.8,319.4 416.1,311.6" fill="none" stroke="#3c3c3c" stroke-width="0.5" />
<polyline points="306.8,317.2 306.8,328.0" fill="none" stroke="#3c3c3c" stroke-width="0.6" />
<polyline points="416.1,309.0 416.1,319.8" fill="none" stroke="#3c3c3c" stroke-width="0.6" />
<polyline points="305.0,300.4 308.6,298.0" fill="none" stroke="#3c3c3c" stroke-width="0.5" />
<polyline points="305.0,320.6 308.6,318.2" fill="none" stroke="#3c3c3c" stroke-width="0.5" />
<polyline points="414.3,312.8 417.9,310.4" fill="none" stroke="#3c3c3c" stroke-width="0.5" />
<polyline points="539.7,284.4 543.3,282.0" fill="none" stroke="#3c3c3c" stroke-width="0.5" />
<text x="362.1" y="313.8" font-size="6.6" fill="#484848" text-anchor="middle">18</text>
<text x="424.2" y="289.0" font-size="6.6" fill="#484848" text-anchor="middle">38,8</text>
<path d="M397.6 355A15 15 0 0 1 424.3 343.3" fill="none" stroke="#333" stroke-width="0.6"/>
<polyline points="405.6,334.6 407.2,338.0" fill="none" stroke="#333" stroke-width="0.6" />
<polyline points="408.3,342.2 410.4,347.0" fill="none" stroke="#333" stroke-width="0.6" />
<text x="389.2" y="344.1" font-size="6.5" fill="#555" text-anchor="middle">70,0°</text>
<path d="M577.5 327A21.7 21.7 0 0 1 583.2 340.1" fill="none" stroke="#333" stroke-width="0.6"/>
<text x="591.5" y="331.8" font-size="6.5" fill="#555" text-anchor="middle">40,0°</text>
<polyline points="378.8,379.7 417.3,376.9" fill="none" stroke="#7072a8" stroke-width="0.55" />
<polyline points="380.3,371.6 380.3,381.1" fill="none" stroke="#7072a8" stroke-width="0.55" />
<polyline points="378.7,380.7 381.9,378.5" fill="none" stroke="#7072a8" stroke-width="0.5" />
<polyline points="415.8,369.0 415.8,378.5" fill="none" stroke="#7072a8" stroke-width="0.55" />
<polyline points="414.2,378.1 417.4,375.9" fill="none" stroke="#7072a8" stroke-width="0.5" />
<text x="398.6" y="377.1" font-size="6.3" fill="#3c3c3c" text-anchor="middle" letter-spacing="0.7">&gt;= 5,8</text>
<polyline points="341.8,397.7 417.3,392.5" fill="none" stroke="#7072a8" stroke-width="0.55" />
<polyline points="343.3,389.6 343.3,399.1" fill="none" stroke="#7072a8" stroke-width="0.55" />
<polyline points="341.7,398.7 344.9,396.5" fill="none" stroke="#7072a8" stroke-width="0.5" />
<polyline points="415.8,384.6 415.8,394.1" fill="none" stroke="#7072a8" stroke-width="0.55" />
<polyline points="414.2,393.7 417.4,391.5" fill="none" stroke="#7072a8" stroke-width="0.5" />
<text x="380.6" y="393.6" font-size="6.3" fill="#3c3c3c" text-anchor="middle" letter-spacing="0.7">&lt;= 12,0</text>
<polyline points="341.8,412.4 543.5,398.2" fill="none" stroke="#7072a8" stroke-width="0.55" />
<polyline points="343.3,404.3 343.3,413.8" fill="none" stroke="#7072a8" stroke-width="0.55" />
<polyline points="341.7,413.4 344.9,411.2" fill="none" stroke="#7072a8" stroke-width="0.5" />
<polyline points="542.0,390.3 542.0,399.8" fill="none" stroke="#7072a8" stroke-width="0.55" />
<polyline points="540.4,399.4 543.6,397.2" fill="none" stroke="#7072a8" stroke-width="0.5" />
<text x="442.3" y="402.6" font-size="6.3" fill="#3c3c3c" text-anchor="middle" letter-spacing="0.7">&lt;= 32,8</text>
<polyline points="457.5,388.7 543.5,382.5" fill="none" stroke="#7072a8" stroke-width="0.55" />
<polyline points="459.0,380.6 459.0,390.1" fill="none" stroke="#7072a8" stroke-width="0.55" />
<polyline points="457.4,389.7 460.6,387.5" fill="none" stroke="#7072a8" stroke-width="0.5" />
<polyline points="542.0,374.6 542.0,384.1" fill="none" stroke="#7072a8" stroke-width="0.55" />
<polyline points="540.4,383.7 543.6,381.5" fill="none" stroke="#7072a8" stroke-width="0.5" />
<text x="500.6" y="383.5" font-size="6.3" fill="#3c3c3c" text-anchor="middle" letter-spacing="0.7">&gt;= 13,6</text>
<polyline points="598.5,132.2 624.6,158.8 688.0,228.6" fill="none" stroke="#7072a8" stroke-width="0.7" />
<polyline points="598.5,130.2 598.5,141.2" fill="none" stroke="#7072a8" stroke-width="0.6" />
<polyline points="624.6,155.5 624.6,166.0" fill="none" stroke="#7072a8" stroke-width="0.6" />
<polyline points="619.8,164.5 627.6,157.0" fill="none" stroke="#7072a8" stroke-width="0.5" />
<polyline points="682.0,234.6 690.4,227.0" fill="none" stroke="#7072a8" stroke-width="0.5" />
<polyline points="688.0,226.0 688.0,231.0" fill="none" stroke="#7072a8" stroke-width="0.6" />
<polyline points="676.8,244.2 678.6,246.2" fill="none" stroke="#444" stroke-width="0.6" />
<text x="613.0" y="143.4" font-size="6.7" fill="#3c3c3c" text-anchor="middle" transform="rotate(8 613.0 141.0)">16</text>
<text x="657.8" y="192.5" font-size="6.7" fill="#3c3c3c" text-anchor="middle" transform="rotate(8 657.8 190.1)">16</text>
<polyline points="666.2,159.4 654.0,170.6" fill="none" stroke="#2222dd" stroke-width="0.8" />
<polygon points="651.2,173.2 653.2,168.8 655.8,171.6" fill="#2222dd" />
<text x="676.3" y="168.2" font-size="6.8" fill="#3a3af0" text-anchor="middle">35,0</text>
<polyline points="519.4,261.2 571.8,319.9" fill="none" stroke="#5c5ea4" stroke-width="0.7" />
<polyline points="517.8,262.6 521.0,259.8" fill="none" stroke="#7072a8" stroke-width="0.5" />
<polyline points="518.0,259.7 520.8,262.7" fill="none" stroke="#7072a8" stroke-width="0.5" />
<polyline points="545.9,295.0 549.1,292.2" fill="none" stroke="#7072a8" stroke-width="0.5" />
<polyline points="546.1,292.1 548.9,295.1" fill="none" stroke="#7072a8" stroke-width="0.5" />
<polyline points="570.2,321.3 573.4,318.5" fill="none" stroke="#7072a8" stroke-width="0.5" />
<polyline points="570.4,318.4 573.2,321.4" fill="none" stroke="#7072a8" stroke-width="0.5" />
<polyline points="518.0,262.6 507.0,272.8" fill="none" stroke="#4a4ae0" stroke-width="0.5" stroke-dasharray="3 1.5"/>
<polygon points="504.8,275.0 506.2,272.6 507.6,274.2" fill="#2222dd" />
<polyline points="570.4,321.2 559.0,331.4" fill="none" stroke="#4a4ae0" stroke-width="0.5" stroke-dasharray="3 1.5"/>
<polygon points="556.6,333.4 558.0,331.0 559.4,332.6" fill="#2222dd" />
<text x="533.3" y="275.6" font-size="6.5" fill="#3c3c3c" text-anchor="middle">7,3</text>
<text x="559.0" y="305.6" font-size="6.5" fill="#3c3c3c" text-anchor="middle">6</text>
<polyline points="760.2,300.9 787.8,326.6 787.8,436.0" fill="none" stroke="#7072a8" stroke-width="0.6" />
<polyline points="752.5,301.6 763.0,301.0" fill="none" stroke="#7072a8" stroke-width="0.55" />
<polyline points="778.5,327.0 790.0,326.4" fill="none" stroke="#7072a8" stroke-width="0.55" />
<polyline points="783.0,436.2 790.5,435.8" fill="none" stroke="#7072a8" stroke-width="0.55" />
<polyline points="786.3,325.0 789.3,328.0" fill="none" stroke="#7072a8" stroke-width="0.5" />
<polyline points="786.3,434.4 789.3,437.4" fill="none" stroke="#7072a8" stroke-width="0.5" />
<text x="774.2" y="311.7" font-size="6.7" fill="#3c3c3c" text-anchor="middle" transform="rotate(8 774.2 309.3)">16</text>
<text x="782.6" y="383.3" font-size="6.4" fill="#555" text-anchor="middle" transform="rotate(-90 782.6 381.0)">18</text>
<polyline points="747.0,326.5 747.0,341.5" fill="none" stroke="#3c3c3c" stroke-width="0.55" />
<polyline points="739.0,328.0 749.0,327.4" fill="none" stroke="#3c3c3c" stroke-width="0.5" />
<polyline points="739.0,340.6 749.0,340.0" fill="none" stroke="#3c3c3c" stroke-width="0.5" />
<polyline points="745.6,328.9 748.4,326.1" fill="none" stroke="#3c3c3c" stroke-width="0.5" />
<polyline points="745.6,341.5 748.4,338.7" fill="none" stroke="#3c3c3c" stroke-width="0.5" />
<text x="742.3" y="336.8" font-size="6.8" fill="#555" text-anchor="middle" transform="rotate(-90 742.3 334.4)">1,5</text>
<polyline points="767.0,326.0 767.0,349.0" fill="none" stroke="#3c3c3c" stroke-width="0.55" />
<polyline points="759.0,328.0 769.6,327.4" fill="none" stroke="#3c3c3c" stroke-width="0.5" />
<polyline points="759.0,348.2 769.6,347.6" fill="none" stroke="#3c3c3c" stroke-width="0.5" />
<polyline points="765.6,328.9 768.4,326.1" fill="none" stroke="#3c3c3c" stroke-width="0.5" />
<polyline points="765.6,349.1 768.4,346.3" fill="none" stroke="#3c3c3c" stroke-width="0.5" />
<text x="762.6" y="339.8" font-size="6.8" fill="#555" text-anchor="middle" transform="rotate(-90 762.6 337.4)">3</text>
<polyline points="783.3,367.1 797.0,366.1" fill="none" stroke="#2222dd" stroke-width="0.9" />
<polygon points="802.8,365.6 796.4,364.0 796.8,368.2" fill="#2222dd" />
<text x="803.5" y="362.0" font-size="6.8" fill="#3a3af0" text-anchor="middle">26,8</text>
</svg>
<!--DRAWING_END-->
<!-- STATUS -->
<div class="a" style="left:0;top:493px;width:900px;height:13px;background:#f1f0ef"></div>
</div>
</body>
</html>
